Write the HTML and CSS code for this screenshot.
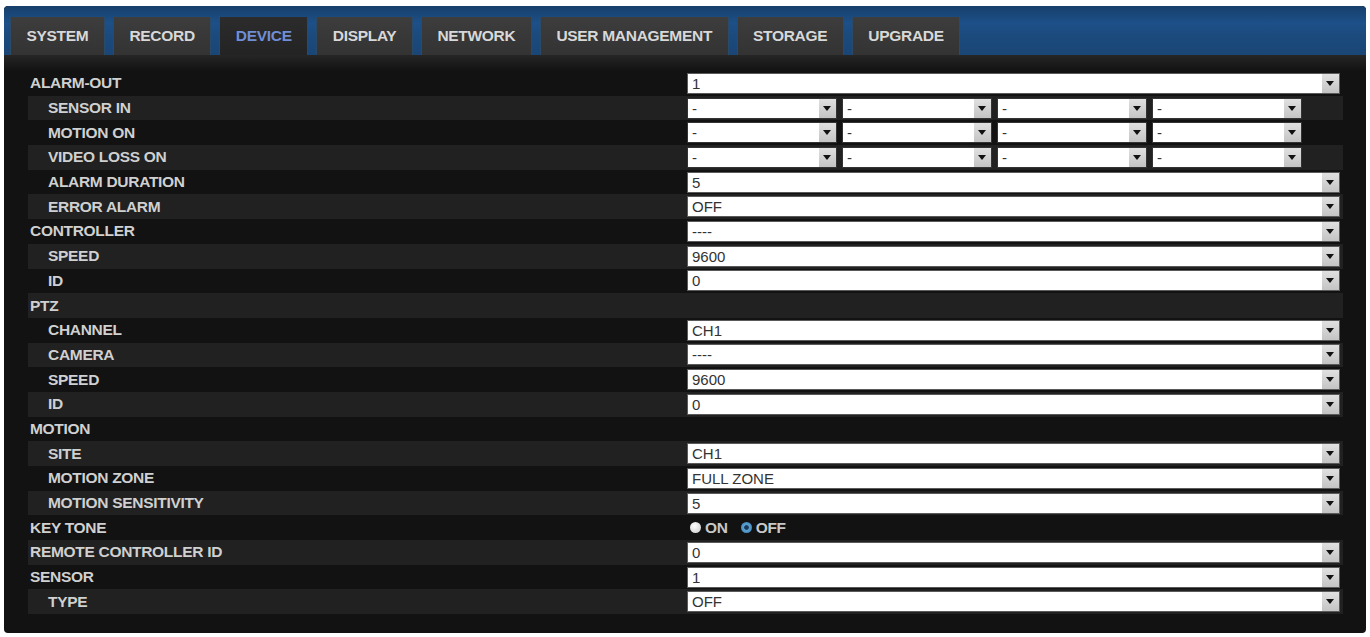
FILE: index.html
```html
<!DOCTYPE html>
<html lang="en">
<head>
    <meta charset="UTF-8">
    <title>DEVICE</title>
    <link rel="stylesheet" href="styles.css">
</head>
<body>
    <div class="panel">
        <div class="tabbar">
            <div class="tab">SYSTEM</div>
            <div class="tab">RECORD</div>
            <div class="tab active">DEVICE</div>
            <div class="tab">DISPLAY</div>
            <div class="tab">NETWORK</div>
            <div class="tab">USER MANAGEMENT</div>
            <div class="tab">STORAGE</div>
            <div class="tab">UPGRADE</div>
        </div>
        <div class="rows" id="rows"></div>
    </div>

    <script>
        const rows = [
            ["ALARM-OUT", 0, "1"],
            ["SENSOR IN", 1, "quad"],
            ["MOTION ON", 1, "quad"],
            ["VIDEO LOSS ON", 1, "quad"],
            ["ALARM DURATION", 1, "5"],
            ["ERROR ALARM", 1, "OFF"],
            ["CONTROLLER", 0, "----"],
            ["SPEED", 1, "9600"],
            ["ID", 1, "0"],
            ["PTZ", 0, null],
            ["CHANNEL", 1, "CH1"],
            ["CAMERA", 1, "----"],
            ["SPEED", 1, "9600"],
            ["ID", 1, "0"],
            ["MOTION", 0, null],
            ["SITE", 1, "CH1"],
            ["MOTION ZONE", 1, "FULL ZONE"],
            ["MOTION SENSITIVITY", 1, "5"],
            ["KEY TONE", 0, "radio"],
            ["REMOTE CONTROLLER ID", 0, "0"],
            ["SENSOR", 0, "1"],
            ["TYPE", 1, "OFF"]
        ];
        const box = document.getElementById("rows");

        function makeSelect(text, cls) {
            let sel = document.createElement("div");
            sel.className = "select " + cls;
            let span = document.createElement("span");
            span.textContent = text;
            let arrow = document.createElement("i");
            arrow.className = "arrow";
            sel.appendChild(span);
            sel.appendChild(arrow);
            return sel;
        }

        rows.forEach((r, index) => {
            let row = document.createElement("div");
            row.className = "row" + (index % 2 ? " light" : "");
            let label = document.createElement("div");
            label.className = "label" + (r[1] ? " sub" : "");
            label.textContent = r[0];
            let value = document.createElement("div");
            value.className = "value";
            if (r[2] === "quad") {
                for (let i = 0; i < 4; i++) value.appendChild(makeSelect("-", "small"));
            } else if (r[2] === "radio") {
                value.innerHTML = '<span class="radio"></span><span class="opt">ON</span>' +
                    '<span class="radio on"></span><span class="opt">OFF</span>';
            } else if (r[2] !== null) {
                value.appendChild(makeSelect(r[2], "wide"));
            }
            row.appendChild(label);
            row.appendChild(value);
            box.appendChild(row);
        });
    </script>
</body>
</html>
```

FILE: styles.css
```css
body {
    margin: 0;
    background-color: #ffffff;
    font-family: "Liberation Sans", Arial, sans-serif;
}
.panel {
    margin: 6px 4px 4px;
    height: 627px;
    background-color: #121212;
    border-radius: 4px;
    overflow: hidden;
}
.tabbar {
    display: flex;
    gap: 8px;
    height: 49px;
    padding: 11px 0 0 6px;
    box-sizing: border-box;
    background: linear-gradient(#173f6b, #1d5088 35%, #1b4a7d 60%, #1a4676);
    border-radius: 4px 4px 0 0;
}
.tab {
    display: flex;
    align-items: center;
    padding: 0 15.5px;
    background: linear-gradient(#3d3d3d, #333333);
    border-left: 1px solid #2a4a6a;
    border-right: 1px solid #2a4a6a;
    color: #d8d8d8;
    font-size: 15.5px;
    font-weight: bold;
    letter-spacing: -0.3px;
}
.tab.active {
    background: linear-gradient(#2c2c2c, #232323);
    color: #6f8ed6;
}
.rows {
    padding: 16px 23px 0 24px;
    background: linear-gradient(#262626, #121212 16px);
}
.row {
    display: grid;
    grid-template-columns: 659px 1fr;
    align-items: center;
    height: 24.7px;
    padding-right: 3px;
}
.row.light {
    background-color: #212121;
}
.label {
    padding-left: 2px;
    color: #d0d0d0;
    font-size: 15.5px;
    font-weight: bold;
    letter-spacing: -0.3px;
}
.label.sub {
    padding-left: 20px;
}
.value {
    display: flex;
    align-items: center;
    gap: 5px;
    height: 100%;
}
.select {
    display: flex;
    align-items: center;
    justify-content: space-between;
    height: 21px;
    box-sizing: border-box;
    background-color: #ffffff;
    border: 1px solid #5a5a5a;
    color: #333333;
    font-size: 15px;
}
.select span {
    padding-left: 4px;
}
.select.wide {
    width: 653px;
}
.select.small {
    width: 150px;
    border-color: #333333;
}
.arrow {
    position: relative;
    width: 17px;
    height: 100%;
    background: linear-gradient(#e0e0e0, #c4c4c4);
}
.arrow::after {
    content: "";
    position: absolute;
    left: 4px;
    top: 7px;
    border-left: 4.5px solid transparent;
    border-right: 4.5px solid transparent;
    border-top: 5px solid #111111;
}
.radio {
    width: 11px;
    height: 11px;
    margin-left: 3px;
    border-radius: 50%;
    background: radial-gradient(circle at 40% 35%, #ffffff, #c8c8c8);
}
.radio.on {
    margin-left: 8px;
    background: radial-gradient(circle, #1a3a5a 25%, #5aa0d0 35%, #3b7fb5);
}
.opt {
    color: #c8c8c8;
    font-size: 15.5px;
    font-weight: bold;
    letter-spacing: -0.3px;
}
.value .radio + .opt {
    margin-left: -1px;
}
```
